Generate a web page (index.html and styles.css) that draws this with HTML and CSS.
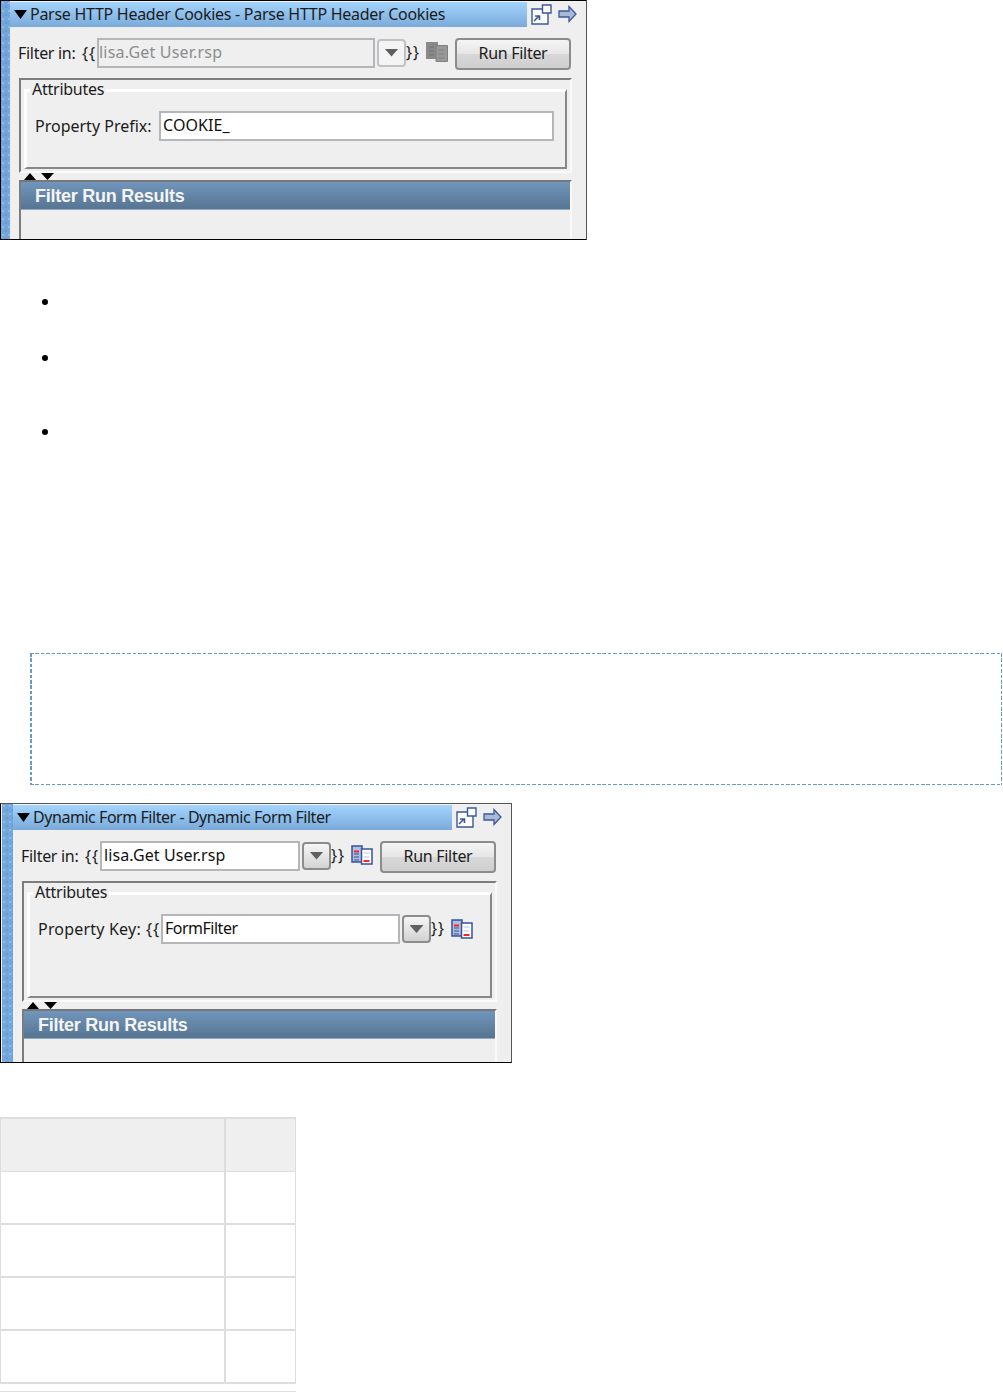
FILE: index.html
```
<!DOCTYPE html>
<html>
<head>
    <meta charset="UTF-8">
    <title>Filters</title>
    <link rel="stylesheet" href="styles.css">
</head>
<body>

<!-- shared icons -->
<svg class="defs">
    <defs>
        <symbol id="popout" viewBox="0 0 21 21">
            <path d="M1 5h16v15H1z" fill="#fff" stroke="#3c589a" stroke-width="1.4"/>
            <path d="M11.500 1h8.500v8h-8.500z" fill="#fff" stroke="#3c589a" stroke-width="1.4"/>
            <path d="M3 17l5-5M4 12h4.500v4" fill="none" stroke="#3c589a" stroke-width="1.600"/>
        </symbol>
        <symbol id="arrow" viewBox="0 0 19 18">
            <path d="M1 6h10V1.500L18 9l-7 7.500V12H1z" fill="#a9bad7" stroke="#3c589a" stroke-width="1.300"/>
        </symbol>
        <symbol id="docs" viewBox="0 0 22 20">
            <path d="M1 1h10v16H1z" fill="#aebfe0" stroke="#36539a" stroke-width="1.500"/>
            <path d="M3 9h5M3 12h5M3 15h5" stroke="#36539a" stroke-width="1.200"/>
            <path d="M3 6.500h5" stroke="#f22" stroke-width="2"/>
            <path d="M10.500 4H21v15H10.500z" fill="#fff" stroke="#36539a" stroke-width="1.500"/>
            <path d="M12.500 8h6M12.500 12h6" stroke="#b8c5de" stroke-width="1.200"/>
            <path d="M12.500 16h6" stroke="#f22" stroke-width="2"/>
        </symbol>
        <symbol id="docs-off" viewBox="0 0 22 20">
            <path d="M0 0h12v17H0z" fill="#898989"/>
            <path d="M3 5h5M3 9h5M3 13h5" stroke="#737373"/>
            <path d="M10 3.500h11.500v16H10z" fill="#999" stroke="#808080"/>
            <path d="M12.500 8h6M12.500 12h6M12.500 16h6" stroke="#808080"/>
        </symbol>
    </defs>
</svg>

<div class="shot cookies">
    <div class="strip"></div>
    <div class="main">
        <div class="top">
            <div class="title"><i class="down"></i><span>Parse HTTP Header Cookies - Parse HTTP Header Cookies</span></div>
            <svg class="popout"><use href="#popout"/></svg>
            <svg class="arrow"><use href="#arrow"/></svg>
        </div>
        <div class="row filter">
            <span class="label">Filter in:</span><span class="brace">{{</span>
            <div class="input off">lisa.Get User.rsp</div>
            <div class="drop off"><i class="down"></i></div>
            <span class="brace end">}}</span>
            <svg class="docs"><use href="#docs-off"/></svg>
            <div class="run">Run Filter</div>
        </div>
        <div class="attrs">
            <fieldset>
                <legend>Attributes</legend>
                <div class="row">
                    <span class="label">Property Prefix:</span>
                    <div class="input">COOKIE_</div>
                </div>
            </fieldset>
        </div>
        <div class="sash"><i class="up"></i><i class="down"></i></div>
        <div class="results"><div class="head">Filter Run Results</div></div>
    </div>
</div>

<ul class="list">
    <li></li>
    <li></li>
    <li></li>
</ul>

<div class="note"></div>

<div class="shot form">
    <div class="strip"></div>
    <div class="main">
        <div class="top">
            <div class="title"><i class="down"></i><span>Dynamic Form Filter - Dynamic Form Filter</span></div>
            <svg class="popout"><use href="#popout"/></svg>
            <svg class="arrow"><use href="#arrow"/></svg>
        </div>
        <div class="row filter">
            <span class="label">Filter in:</span><span class="brace">{{</span>
            <div class="input">lisa.Get User.rsp</div>
            <div class="drop"><i class="down"></i></div>
            <span class="brace end">}}</span>
            <svg class="docs"><use href="#docs"/></svg>
            <div class="run">Run Filter</div>
        </div>
        <div class="attrs">
            <fieldset>
                <legend>Attributes</legend>
                <div class="row">
                    <span class="label">Property Key:</span><span class="brace">{{</span>
                    <div class="input">FormFilter</div>
                    <div class="drop"><i class="down"></i></div>
                    <span class="brace end">}}</span>
                    <svg class="docs"><use href="#docs"/></svg>
                </div>
            </fieldset>
        </div>
        <div class="sash"><i class="up"></i><i class="down"></i></div>
        <div class="results"><div class="head">Filter Run Results</div></div>
    </div>
</div>

<table class="grid">
    <tr><th></th><th></th></tr>
    <tr><td></td><td></td></tr>
    <tr><td></td><td></td></tr>
    <tr><td></td><td></td></tr>
    <tr><td></td><td></td></tr>
</table>
<div class="next"></div>

</body>
</html>
```
FILE: styles.css
```
*{box-sizing:border-box;}
body{margin:0;height:1392px;overflow:hidden;background:#fff;color:#1c1c1c;
    font:16px/20px "Noto Sans","Open Sans",sans-serif;}
.defs{display:none;}
svg{flex:none;display:block;}

.shot{display:flex;border:1px solid #000;border-right-color:#555;background:#efefef;overflow:hidden;}
.cookies{width:587px;height:240px;}
.form{width:512px;height:260px;margin-top:18px;border-top-color:#555;}
.strip{flex:none;width:9px;
    background:radial-gradient(circle at 2px 2px,#a0d2f3 0,transparent 1.5px) 0 0/6px 8px,
    radial-gradient(circle at 5px 6px,#568bbd 0,transparent 1.5px) 0 0/6px 8px,#73a7dc;}
.form .strip{width:12px;border-left:1px solid #f4f4f4;}
.main{flex:1;min-width:0;}

.top{display:flex;height:26px;border-top:1px solid #f4f4f4;}
.title{display:flex;align-items:center;width:517px;height:25px;padding-left:4px;white-space:nowrap;
    background:linear-gradient(#a5d4fb,#9accf7 20%,#7baad8);}
.form .title{width:439px;}
.title span{margin:-2px 0 0 3px;letter-spacing:-0.28px;}
.form .title span{letter-spacing:-0.45px;}
.down{display:block;flex:none;width:13px;height:9px;background:#000;clip-path:polygon(0 0,100% 0,50% 100%);}
.up{display:block;flex:none;width:12px;height:7px;background:#000;clip-path:polygon(50% 0,100% 100%,0 100%);}
.popout{width:21px;height:21px;margin:2px 0 0 4px;}
.arrow{width:19px;height:18px;margin:3px 0 0 6px;}

.row{display:flex;align-items:center;white-space:nowrap;}
.filter{height:51px;padding-left:8px;}
.label{flex:none;width:64px;letter-spacing:-0.3px;}
.brace{flex:none;width:15px;letter-spacing:1px;}
.brace.end{width:20px;margin-top:-2px;}
.input{flex:none;width:278px;height:30px;padding:0 2px;line-height:24px;
    border:2px solid #b6b6ba;background:#fff;color:#111;letter-spacing:0.1px;}
.input.off{padding:0;background:#efefef;color:#8d8d8d;letter-spacing:0.2px;}
.drop{flex:none;display:flex;align-items:center;justify-content:center;width:29px;height:28px;margin-left:2px;
    border:2px solid #8c8c8c;border-radius:4px;background:linear-gradient(#f6f6f6,#d2d2d2);}
.drop.off{border-color:#bfc2c4;background:#f4f4f4;}
.drop .down{width:14px;height:8px;background:#606060;}
.docs{width:22px;height:20px;}
.filter .docs{margin-top:-1px;}
.run{flex:none;width:116px;height:32px;margin:2px 0 0 7px;text-align:center;line-height:27px;letter-spacing:-0.3px;
    border:2px solid #8c8c8c;border-radius:4px;
    background:linear-gradient(#f5f5f5,#e6e6e6 48%,#d7d7d7 52%,#cfcfcf);}
.form .filter .input{width:200px;}

.attrs{width:553px;height:95px;margin-left:9px;padding:2px 3px 3px 3px;
    border:2px solid #fafafa;border-top-color:#7d7d7d;border-left-color:#7d7d7d;}
.form .attrs{width:475px;height:121px;}
fieldset{height:87px;margin:0;padding:0;min-width:0;border:3px solid #fff;
    border-right:2px solid #878787;border-bottom:2px solid #878787;}
.form fieldset{height:113px;}
legend{height:16px;margin-left:3px;padding:0 2px;line-height:15px;letter-spacing:-0.25px;}
fieldset .row{margin-top:13px;padding-left:8px;}
fieldset .label{letter-spacing:0;}
.cookies fieldset .label{width:124px;}
.cookies fieldset .input{width:395px;}
.form fieldset .label{width:108px;letter-spacing:0.2px;}
.form fieldset .input{width:239px;letter-spacing:-0.5px;}

.sash{display:flex;align-items:flex-end;height:7px;margin-left:14px;}
.sash .down{height:7px;margin-left:5px;}
.results{width:553px;height:64px;margin-left:9px;border:2px solid #fafafa;
    border-top-color:#777;border-left-color:#7d7d7d;}
.form .results{width:475px;}
.head{height:28px;padding-left:14px;color:#f5f5f5;line-height:29px;letter-spacing:-0.25px;
    font-family:"Liberation Sans",Arial,sans-serif;font-size:18px;font-weight:bold;
    border-bottom:1px solid #91abc5;background:linear-gradient(#7195bc,#567591);}

.list{margin:52px 0 0;padding-left:60px;height:361px;list-style:none;}
.list li{display:flow-root;height:56px;}
.list li:nth-child(2){height:74px;}
.list li:before{content:"";display:block;width:6px;height:6px;margin:7px 0 0 -18px;border-radius:50%;background:#000;}

.note{width:972px;height:132px;margin-left:30px;
    background:repeating-linear-gradient(90deg,#69c 0,#69c 3.6px,transparent 3.6px,transparent 5.4px) 0 0/100% 1px no-repeat,
    repeating-linear-gradient(90deg,#69c 0,#69c 3.6px,transparent 3.6px,transparent 5.4px) 0 100%/100% 1px no-repeat,
    repeating-linear-gradient(#69c 0,#69c 3.6px,transparent 3.6px,transparent 5.4px) 0 0/2px 100% no-repeat,
    repeating-linear-gradient(#69c 0,#69c 3.6px,transparent 3.6px,transparent 5.4px) 100% 0/1px 100% no-repeat;}

.grid{width:296px;margin-top:54px;table-layout:fixed;border-spacing:0;
    border:solid #ddd;border-width:1px 0;}
.grid th,.grid td{width:71px;height:53px;padding:0;border:1px solid #ddd;}
.grid th{border-bottom:0;background:#efefef;}
.grid th:first-child{width:225px;}
.next{width:296px;height:1px;margin-top:7px;background:#ddd;}
```
